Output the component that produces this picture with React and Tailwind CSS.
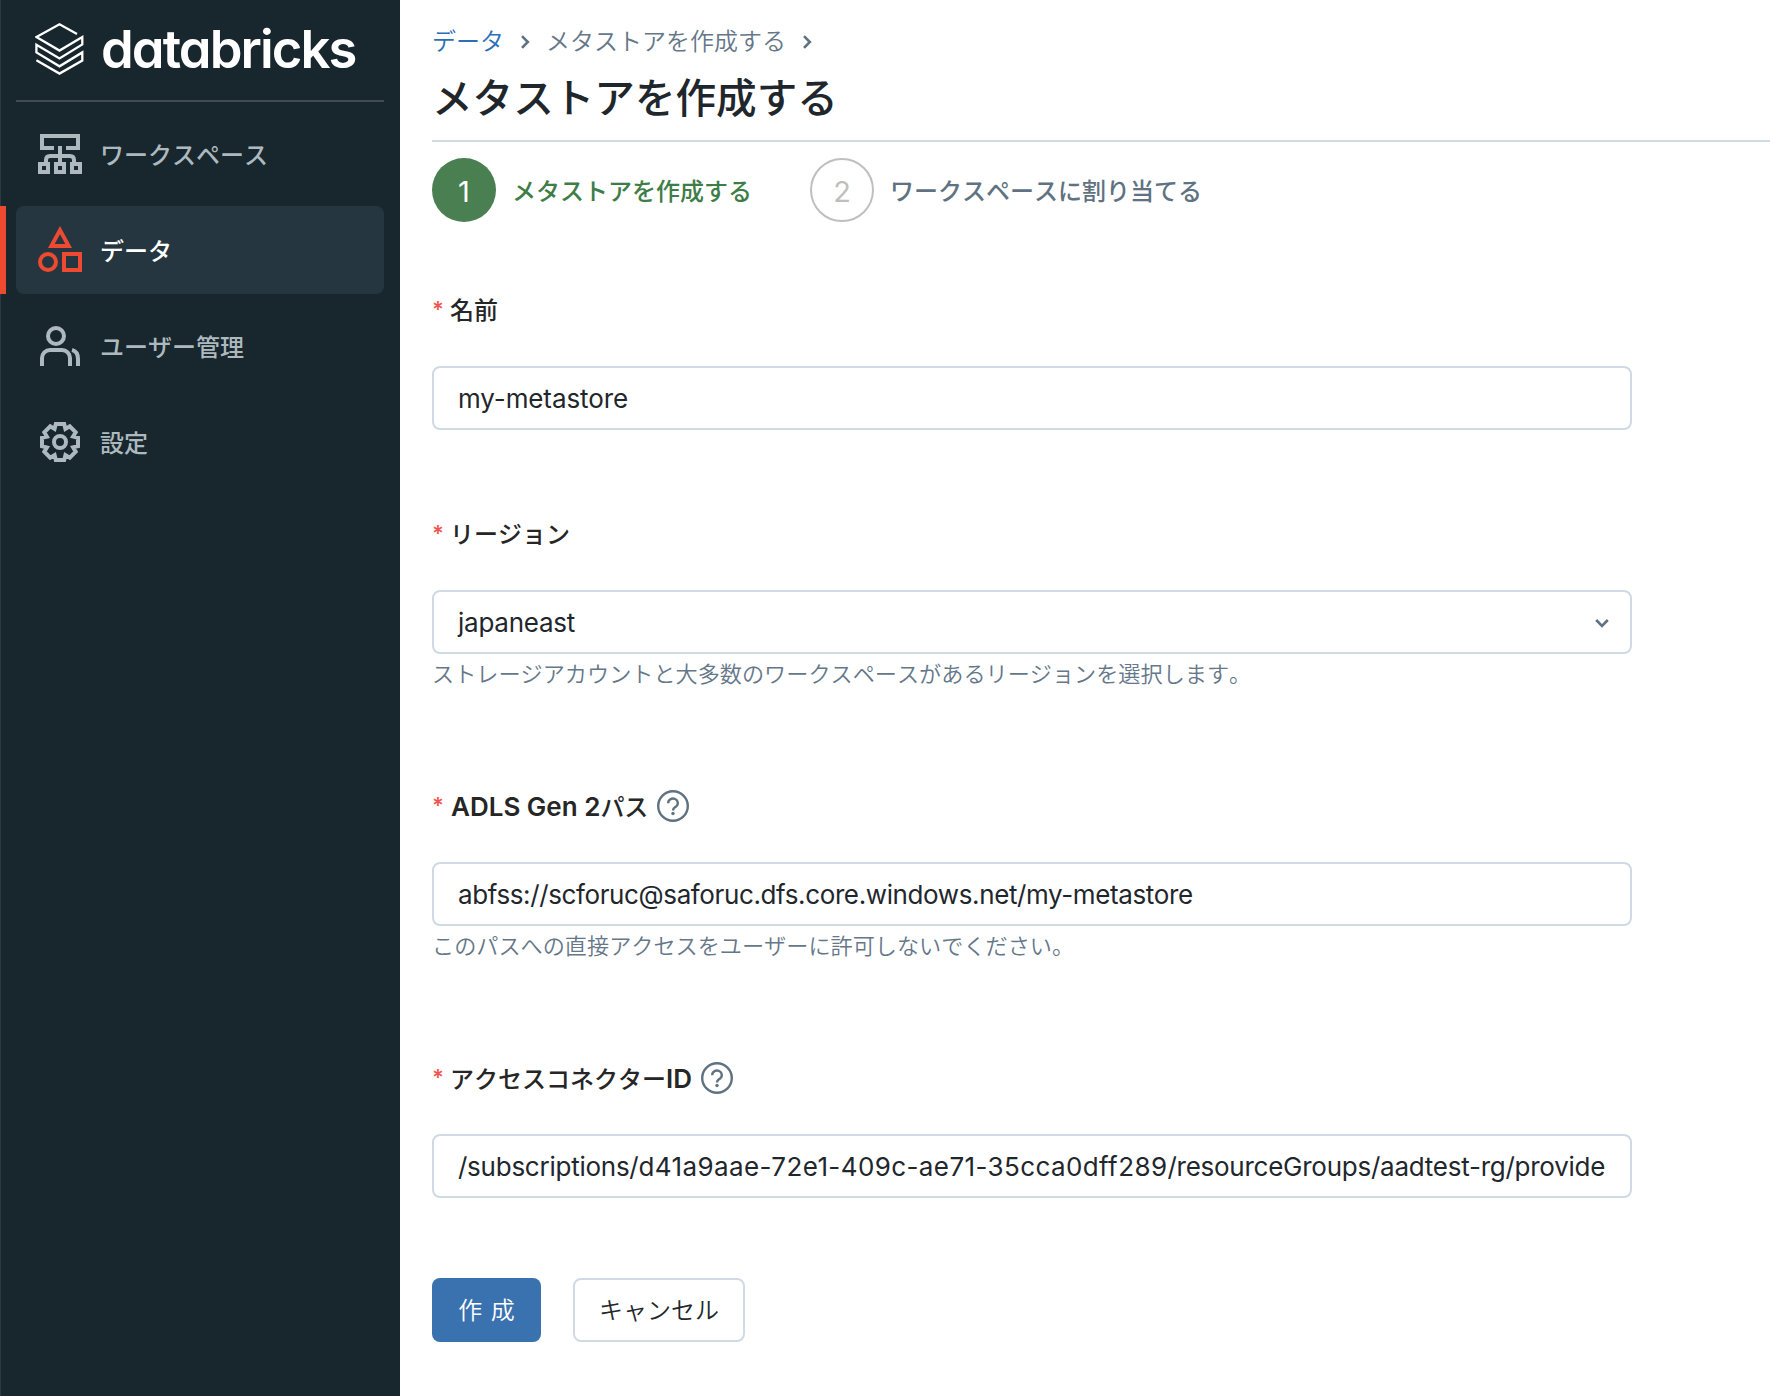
import React from "react";

function Logo() {
  return (
    <svg width="49" height="54" viewBox="-0.500 0 49 54" fill="none" stroke="#fff" strokeWidth="2.3" className="-mt-[3px] -ml-[1px] block shrink-0">
      <path d="M41.5 12 L24 2.2 L0.9 15 L24 28.6 L46.8 15 V22.4 L24 36.4 L0.9 22.8 V30.4 L24 44.3 L46.8 30.4 V38.6 L24 51.6 L0.9 38.2" />
    </svg>
  );
}

function WorkspaceIcon() {
  return (
    <svg width="48" height="48" viewBox="0 0 48 48" fill="none" stroke="currentColor" strokeWidth="4">
      <path d="M18 18H6V6h36v12H30" />
      <path d="M24 16v16M10 32v-2q0-4 4-4h20q4 0 4 4v2" />
      <path d="M4 34h8v8H4zM20 34h8v8h-8zM36 34h8v8h-8z" />
    </svg>
  );
}

function DataIcon() {
  return (
    <svg width="48" height="48" viewBox="0 0 48 48" fill="none" stroke="#ed4a31" strokeWidth="4">
      <path d="M24 0 L36 22 H12 Z M24 8.2 L18.7 18 H29.3 Z" fill="#ed4a31" fillRule="evenodd" stroke="none" />
      <circle cx="12" cy="36" r="8" />
      <path d="M28 28h16v16H28z" />
    </svg>
  );
}

function UsersIcon() {
  return (
    <svg width="48" height="48" viewBox="0 0 48 48" fill="none" stroke="currentColor" strokeWidth="4">
      <circle cx="20" cy="14" r="8" />
      <path d="M6 44v-8a8 8 0 0 1 8-8h12a8 8 0 0 1 8 8v8" />
      <path d="M36 28q6 1.500 6 9v7" />
    </svg>
  );
}

const gearPoints = Array.from({ length: 8 }, (_, i) => {
  const a = (i * Math.PI) / 4;
  return [[-4.2, -18], [4.2, -18], [5.4, -13.1]]
    .map(([x, y]) => `${24 + x * Math.cos(a) - y * Math.sin(a)},${24 + x * Math.sin(a) + y * Math.cos(a)}`)
    .join(" ");
}).join(" ");

function GearIcon() {
  return (
    <svg width="48" height="48" viewBox="0 0 48 48" fill="none" stroke="currentColor" strokeWidth="4">
      <polygon points={gearPoints} />
      <circle cx="24" cy="24" r="6" />
    </svg>
  );
}

function HelpIcon() {
  return (
    <svg width="32" height="32" viewBox="0 0 32 32" fill="none" stroke="#5f7281" strokeWidth="2.4" className="ml-[9px] shrink-0">
      <circle cx="16" cy="16" r="14.8" />
      <path d="M11.200 13.200a4.800 4.500 0 1 1 7.600 3.500c-1.700 1.200-2.800 1.700-2.800 3.700" />
      <circle cx="16" cy="23.500" r="1.700" fill="#5f7281" stroke="none" />
    </svg>
  );
}

function Chevron({ className }) {
  return (
    <svg width="16" height="16" viewBox="0 0 16 16" fill="none" stroke="#5f7281" strokeWidth="2.6" className={className}>
      <path d="M5 2.200 10.800 8 5 13.800" />
    </svg>
  );
}

function NavItem({ icon, label, active }) {
  return (
    <div className="relative">
      {active && <span className="absolute top-0 -left-4 h-[88px] w-[6px] bg-[#ed4a31]" />}
      <div className={active ? "flex h-[88px] items-center rounded-lg bg-[#263640] pl-5 text-white" : "flex h-[88px] items-center pl-5 text-[#adb9bf]"}>
        {icon}
        <span className="ml-4 pt-[3px] text-[24px] leading-[32px] font-medium">{label}</span>
      </div>
    </div>
  );
}

function Field({ label, help, children, hint }) {
  return (
    <div>
      <div className="flex h-16 items-center text-[24px] font-medium text-[#262626]">
        <span className="mr-[9px] w-[9px] pb-[2px] text-[22px] font-semibold text-[#f0544f]">*</span>
        {label}
        {help && <HelpIcon />}
      </div>
      <div className="mt-6 flex h-16 w-[1200px] items-center justify-between rounded-lg border-2 border-[#cfdae5] pt-px pr-5 pl-6 text-[26px] whitespace-nowrap text-[#1f272d] [font-kerning:normal]">
        {children}
      </div>
      {hint && <div className="flex h-10 items-center pt-[2px] text-[22.150px] font-[350] text-[#657789]">{hint}</div>}
    </div>
  );
}

export default function App() {
  return (
    <div className="flex h-[1396px] w-[1770px] overflow-hidden bg-white font-['Inter','Noto_Sans_CJK_JP',sans-serif] [font-kerning:none]">
      <aside className="w-[400px] shrink-0 border-l border-[#2c3940] bg-[#18262d] pr-4 pl-[15px]">
        <div className="flex h-[102px] items-center border-b-2 border-[#3f4c53] pl-5">
          <Logo />
          <span className="-mt-[3px] ml-[17px] text-[52.500px] leading-[60px] font-semibold tracking-[-1.900px] text-white [font-feature-settings:'cv11'] [font-kerning:normal]">databricks</span>
        </div>
        <nav className="mt-2 flex flex-col gap-2">
          <NavItem icon={<WorkspaceIcon />} label="ワークスペース" />
          <NavItem icon={<DataIcon />} label="データ" active />
          <NavItem icon={<UsersIcon />} label="ユーザー管理" />
          <NavItem icon={<GearIcon />} label="設定" />
        </nav>
      </aside>

      <main className="flex-1 pl-8">
        <header className="h-[142px] border-b-2 border-[#cfdae5] pt-[21px]">
          <div className="flex h-10 items-center text-[24px] font-[350] text-[#657789]">
            <span className="pt-[2px] text-[#2c6fb5]">データ</span>
            <Chevron className="mt-[2px] mr-[13px] ml-[13px]" />
            <span className="pt-[2px]">メタストアを作成する</span>
            <Chevron className="mt-[2px] ml-[13px]" />
          </div>
          <h1 className="mt-[6px] text-[40.600px] leading-[64px] font-medium text-[#1f272d]">メタストアを作成する</h1>
        </header>

        <div className="mt-4 flex h-16 items-center text-[24px] font-medium">
          <span className="flex size-16 items-center justify-center rounded-full bg-[#4a7f52] pt-[3px] text-[29px] font-normal text-white">1</span>
          <span className="ml-4 w-[298px] pt-[3px] text-[#3f7d48]">メタストアを作成する</span>
          <span className="flex size-16 items-center justify-center rounded-full border-2 border-[#bfbfbf] pt-[3px] text-[29px] font-normal text-[#bfbfbf]">2</span>
          <span className="ml-4 pt-[3px] text-[#5f7281]">ワークスペースに割り当てる</span>
        </div>

        <form className="mt-14">
          <Field label={<span className="pt-[2px]">名前</span>}>
            <span className="tracking-[-0.100px]">my-metastore</span>
          </Field>
          <div className="mt-[72px]">
            <Field label={<span className="pt-[2px]">リージョン</span>} hint="ストレージアカウントと大多数のワークスペースがあるリージョンを選択します。">
              <span className="tracking-[-0.250px]">japaneast</span>
              <Chevron className="rotate-90" />
            </Field>
          </div>
          <div className="mt-20">
            <Field
              label={<span className="pl-px"><span className="text-[26px] font-semibold">ADLS Gen 2</span>パス</span>}
              help
              hint="このパスへの直接アクセスをユーザーに許可しないでください。"
            >
              <span className="tracking-[-0.380px]">abfss://scforuc@saforuc.dfs.core.windows.net/my-metastore</span>
            </Field>
          </div>
          <div className="mt-20">
            <Field label={<span>アクセスコネクター<span className="text-[26px] font-semibold">ID</span></span>} help>
              <span className="tracking-[-0.250px]">
                /subscriptions/<span className="tracking-[0.400px]">d41a9aae-72e1-409c-ae71-35cca0dff289</span>/resourceGroups/aadtest-rg/provide
              </span>
            </Field>
          </div>
          <div className="mt-20 flex gap-8 text-[24px] font-[350]">
            <button type="button" className="h-16 w-[109px] rounded-lg bg-[#3a72b0] pt-[2px] text-white [word-spacing:2px]">作 成</button>
            <button type="button" className="h-16 w-[172px] rounded-lg border-2 border-[#cfdae5] pt-[2px] text-[#1f272d]">キャンセル</button>
          </div>
        </form>
      </main>
    </div>
  );
}
